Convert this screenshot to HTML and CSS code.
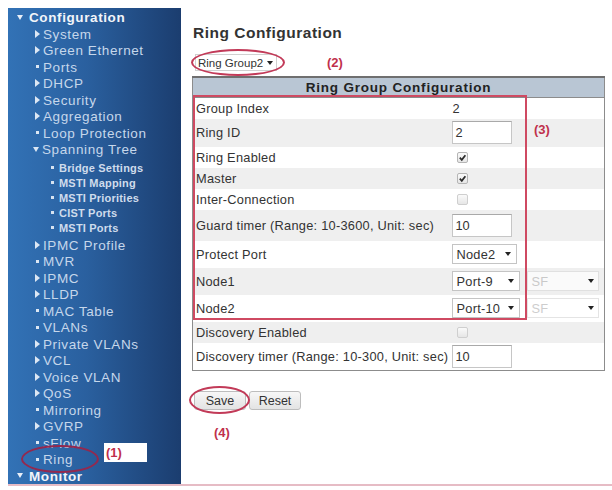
FILE: index.html
```html
<!DOCTYPE html>
<html lang="en">
<head>
  <meta charset="UTF-8">
  <title>Ring Configuration</title>
  <link rel="stylesheet" href="styles.css">
</head>
<body>

<div class="page">

  <!-- Navigation tree -->
  <div class="menu">
    <div class="group">Configuration</div>
    <ul class="items">
      <li class="more">System</li>
      <li class="more">Green Ethernet</li>
      <li class="leaf">Ports</li>
      <li class="more">DHCP</li>
      <li class="more">Security</li>
      <li class="more">Aggregation</li>
      <li class="leaf">Loop Protection</li>
      <li class="open">Spanning Tree
        <ul class="subitems">
          <li>Bridge Settings</li>
          <li>MSTI Mapping</li>
          <li>MSTI Priorities</li>
          <li>CIST Ports</li>
          <li>MSTI Ports</li>
        </ul>
      </li>
      <li class="more">IPMC Profile</li>
      <li class="leaf">MVR</li>
      <li class="more">IPMC</li>
      <li class="more">LLDP</li>
      <li class="leaf">MAC Table</li>
      <li class="leaf">VLANs</li>
      <li class="more">Private VLANs</li>
      <li class="more">VCL</li>
      <li class="more">Voice VLAN</li>
      <li class="more">QoS</li>
      <li class="leaf">Mirroring</li>
      <li class="more">GVRP</li>
      <li class="leaf">sFlow</li>
      <li class="leaf ring">Ring
        <span class="circle circle-ring"></span>
        <span class="tag">(1)</span>
      </li>
    </ul>
    <div class="group">Monitor</div>
  </div>

  <!-- Ring settings -->
  <div class="main">
    <h1>Ring Configuration</h1>

    <div class="group-pick">
      <span class="pick pick-group">
        <select><option>Ring Group2</option></select>
      </span>
      <span class="note">(2)</span>
      <span class="circle circle-group"></span>
    </div>

    <div class="config">
      <table>
        <colgroup>
          <col class="col-label">
          <col class="col-value">
          <col class="col-extra">
        </colgroup>
        <tr>
          <th colspan="3">Ring Group Configuration</th>
        </tr>
        <tr class="row">
          <td>Group Index</td>
          <td>2</td>
          <td></td>
        </tr>
        <tr class="row row-input">
          <td>Ring ID</td>
          <td><input type="text" value="2"></td>
          <td></td>
        </tr>
        <tr class="row">
          <td>Ring Enabled</td>
          <td><span class="check on"><svg viewBox="0 0 10 10"><path d="M2 5.2 L4.2 7.6 L8.2 2.4"/></svg></span></td>
          <td></td>
        </tr>
        <tr class="row">
          <td>Master</td>
          <td><span class="check on"><svg viewBox="0 0 10 10"><path d="M2 5.2 L4.2 7.6 L8.2 2.4"/></svg></span></td>
          <td></td>
        </tr>
        <tr class="row">
          <td>Inter-Connection</td>
          <td><span class="check"></span></td>
          <td></td>
        </tr>
        <tr class="row row-guard">
          <td>Guard timer (Range: 10-3600, Unit: sec)</td>
          <td><input type="text" value="10"></td>
          <td></td>
        </tr>
        <tr class="row row-pick">
          <td>Protect Port</td>
          <td><span class="pick pick-node"><select><option>Node2</option></select></span></td>
          <td></td>
        </tr>
        <tr class="row row-pick">
          <td>Node1</td>
          <td><span class="pick pick-port"><select><option>Port-9</option></select></span></td>
          <td><span class="pick pick-sf"><select disabled><option>SF</option></select></span></td>
        </tr>
        <tr class="row row-pick">
          <td>Node2</td>
          <td><span class="pick pick-port"><select><option>Port-10</option></select></span></td>
          <td><span class="pick pick-sf"><select disabled><option>SF</option></select></span></td>
        </tr>
        <tr class="row">
          <td>Discovery Enabled</td>
          <td><span class="check"></span></td>
          <td></td>
        </tr>
        <tr class="row row-input">
          <td>Discovery timer (Range: 10-300, Unit: sec)</td>
          <td><input type="text" value="10"></td>
          <td></td>
        </tr>
      </table>
      <span class="frame"></span>
      <span class="note note-3">(3)</span>
    </div>

    <div class="actions">
      <button class="button">Save</button>
      <button class="button">Reset</button>
      <span class="circle circle-save"></span>
    </div>
    <div class="note note-4">(4)</div>
  </div>

</div>

</body>
</html>
```

FILE: styles.css
```css
body {
  margin: 8px 0 0 8px;
  font-family: "Liberation Sans", Arial, sans-serif;
  color: #333;
  background-color: #fff;
}

.page {
  display: flex;
  height: 476px;
  border-bottom: 2px solid #e6bcc5;
}

/* ---- navigation tree ---- */

.menu {
  width: 174px;
  padding-top: 2px;
  overflow: hidden;
  background: linear-gradient(to right, #3272b6, #2a609f 45%, #1b3d6f);
  color: #c6d7eb;
  font-size: 13.5px;
  letter-spacing: 0.6px;
}

.menu ul {
  list-style: none;
  margin: 0;
  padding: 0;
}

.group {
  padding-left: 9px;
  line-height: 16.5px;
  font-weight: bold;
  color: #f2f5fa;
}

.group::before {
  content: "";
  display: inline-block;
  vertical-align: middle;
  margin: -2px 6px 0 0;
  border-top: 5px solid #e8eef7;
  border-left: 3.5px solid transparent;
  border-right: 3.5px solid transparent;
}

.items > li {
  position: relative;
  padding-left: 27px;
  line-height: 16.5px;
}

.items > li::before {
  content: "";
  display: inline-block;
  vertical-align: middle;
  margin-top: -2px;
}

.items > li.more::before {
  margin-right: 3px;
  border-left: 5px solid #dce7f4;
  border-top: 4px solid transparent;
  border-bottom: 4px solid transparent;
}

.items > li.leaf::before {
  width: 3px;
  height: 3px;
  margin: -2px 4px 0 1px;
  background-color: #dce7f4;
}

.items > li.open::before {
  margin: -2px 3px 0 -2px;
  border-top: 5px solid #dce7f4;
  border-left: 3.5px solid transparent;
  border-right: 3.5px solid transparent;
}

.menu .subitems {
  margin: 2px 0 2px -27px;
}

.subitems li {
  padding-left: 43px;
  line-height: 15px;
  font-size: 11px;
  font-weight: bold;
  letter-spacing: 0.2px;
  color: #cfdcec;
}

.subitems li::before {
  content: "";
  display: inline-block;
  vertical-align: middle;
  width: 3px;
  height: 3px;
  margin: -2px 5px 0 0;
  background-color: #d6e2f0;
}

.tag {
  position: absolute;
  left: 96px;
  top: -9px;
  width: 41px;
  height: 19px;
  padding-left: 2px;
  background-color: #fff;
  color: #c0304c;
  font-weight: bold;
  font-size: 13px;
  letter-spacing: 0;
  line-height: 19px;
}

/* ---- annotations ---- */

.circle {
  position: absolute;
  border: 2px solid #c23a58;
  border-radius: 50%;
  box-sizing: border-box;
}

.circle-ring {
  left: 13px;
  top: -7px;
  width: 78px;
  height: 28px;
  border-color: #93294f;
}

.circle-group {
  left: -4px;
  top: -5px;
  width: 94px;
  height: 27px;
}

.circle-save {
  left: -5px;
  top: -5px;
  width: 61px;
  height: 28px;
}

.note {
  color: #c0304c;
  font-weight: bold;
  font-size: 13px;
}

/* ---- main area ---- */

.main {
  flex: 1;
  padding: 0 7px 0 11px;
}

h1 {
  margin: 16px 0 0 1px;
  font-size: 15.5px;
  line-height: 18px;
  letter-spacing: 0.5px;
  color: #333;
}

.group-pick {
  position: relative;
  display: flex;
  align-items: center;
  margin: 12px 0 0 3px;
  height: 17px;
}

.group-pick .note {
  margin-left: 50px;
}

.pick {
  position: relative;
  display: inline-block;
}

.pick::after {
  content: "";
  position: absolute;
  top: 50%;
  margin-top: -2px;
  border-top: 4px solid #222;
  border-left: 3px solid transparent;
  border-right: 3px solid transparent;
  pointer-events: none;
}

.pick select {
  appearance: none;
  -webkit-appearance: none;
  display: block;
  box-sizing: border-box;
  height: 20px;
  margin: 0;
  padding: 0 0 0 3px;
  border: 1px solid #c4c4c4;
  border-radius: 0;
  background-color: #fff;
  font-family: "Liberation Sans", Arial, sans-serif;
  font-size: 12.8px;
  letter-spacing: 0.25px;
  color: #333;
}

.pick-group select {
  width: 82px;
  height: 17px;
  padding-left: 2px;
  font-size: 11.5px;
  letter-spacing: 0;
  border-color: #d0d0d0;
}

.pick-group::after {
  right: 4px;
}

.pick-node select {
  width: 65px;
}

.pick-node::after {
  right: 6px;
}

.pick-port select {
  width: 68px;
}

.pick-port::after {
  right: 6px;
}

.pick-sf {
  margin-left: 5px;
}

.pick-sf select {
  width: 72px;
  color: #b9b9b9;
  border-color: #dadada;
}

.pick-sf::after {
  right: 5px;
}

/* ---- config table ---- */

.config {
  position: relative;
  margin-top: 5px;
}

table {
  width: 412px;
  table-layout: fixed;
  border-collapse: collapse;
  border: 1px solid #8c8c8c;
  font-size: 12.8px;
  letter-spacing: 0.25px;
}

.col-label {
  width: 259px;
}

.col-value {
  width: 71px;
}

.col-extra {
  width: 82px;
}

th {
  height: 19px;
  padding: 0;
  background-color: #b9c6d4;
  border-top: 2px solid #6f6f6f;
  border-bottom: 1px solid #8c8c8c;
  font-size: 13.5px;
  letter-spacing: 0.8px;
  color: #222;
}

td {
  padding: 0;
  white-space: nowrap;
}

td:first-child {
  padding-left: 3px;
}

td:nth-child(2) {
  padding-left: 1px;
}

.row {
  height: 21px;
}

.row-input {
  height: 28px;
}

.row-guard {
  height: 31px;
}

.row-pick {
  height: 27px;
}

.row:nth-child(odd) {
  background-color: #efefef;
}

.row input {
  box-sizing: border-box;
  width: 60px;
  height: 23px;
  margin: 0;
  padding: 0 2px;
  border: 1px solid #c6c6c6;
  border-top-color: #a9a9a9;
  font-family: "Liberation Sans", Arial, sans-serif;
  font-size: 12.8px;
  color: #333;
}

.check {
  display: inline-block;
  vertical-align: middle;
  box-sizing: border-box;
  width: 11px;
  height: 11px;
  margin: -2px 0 0 5px;
  border: 1px solid #cfcfcf;
  border-radius: 2px;
  background: linear-gradient(#fafafa, #e6e6e6);
}

.check.on {
  border-color: #b5b5b5;
}

.check svg {
  display: block;
  width: 9px;
  height: 9px;
}

.check path {
  fill: none;
  stroke: #2b2b2b;
  stroke-width: 1.9;
}

.frame {
  position: absolute;
  left: 1px;
  top: 19px;
  width: 334px;
  height: 225px;
  box-sizing: border-box;
  border: 2px solid #cf4a62;
  pointer-events: none;
}

.note-3 {
  position: absolute;
  left: 342px;
  top: 46px;
}

/* ---- buttons ---- */

.actions {
  position: relative;
  display: flex;
  gap: 3px;
  margin: 20px 0 0 2px;
}

.button {
  width: 52px;
  height: 19px;
  padding: 0;
  border: 1px solid #bdbdbd;
  border-radius: 3px;
  background: linear-gradient(#f7f7f7, #e3e3e3);
  font-family: "Liberation Sans", Arial, sans-serif;
  font-size: 12.5px;
  color: #333;
}

.note-4 {
  margin: 15px 0 0 22px;
  line-height: 15px;
}
```
